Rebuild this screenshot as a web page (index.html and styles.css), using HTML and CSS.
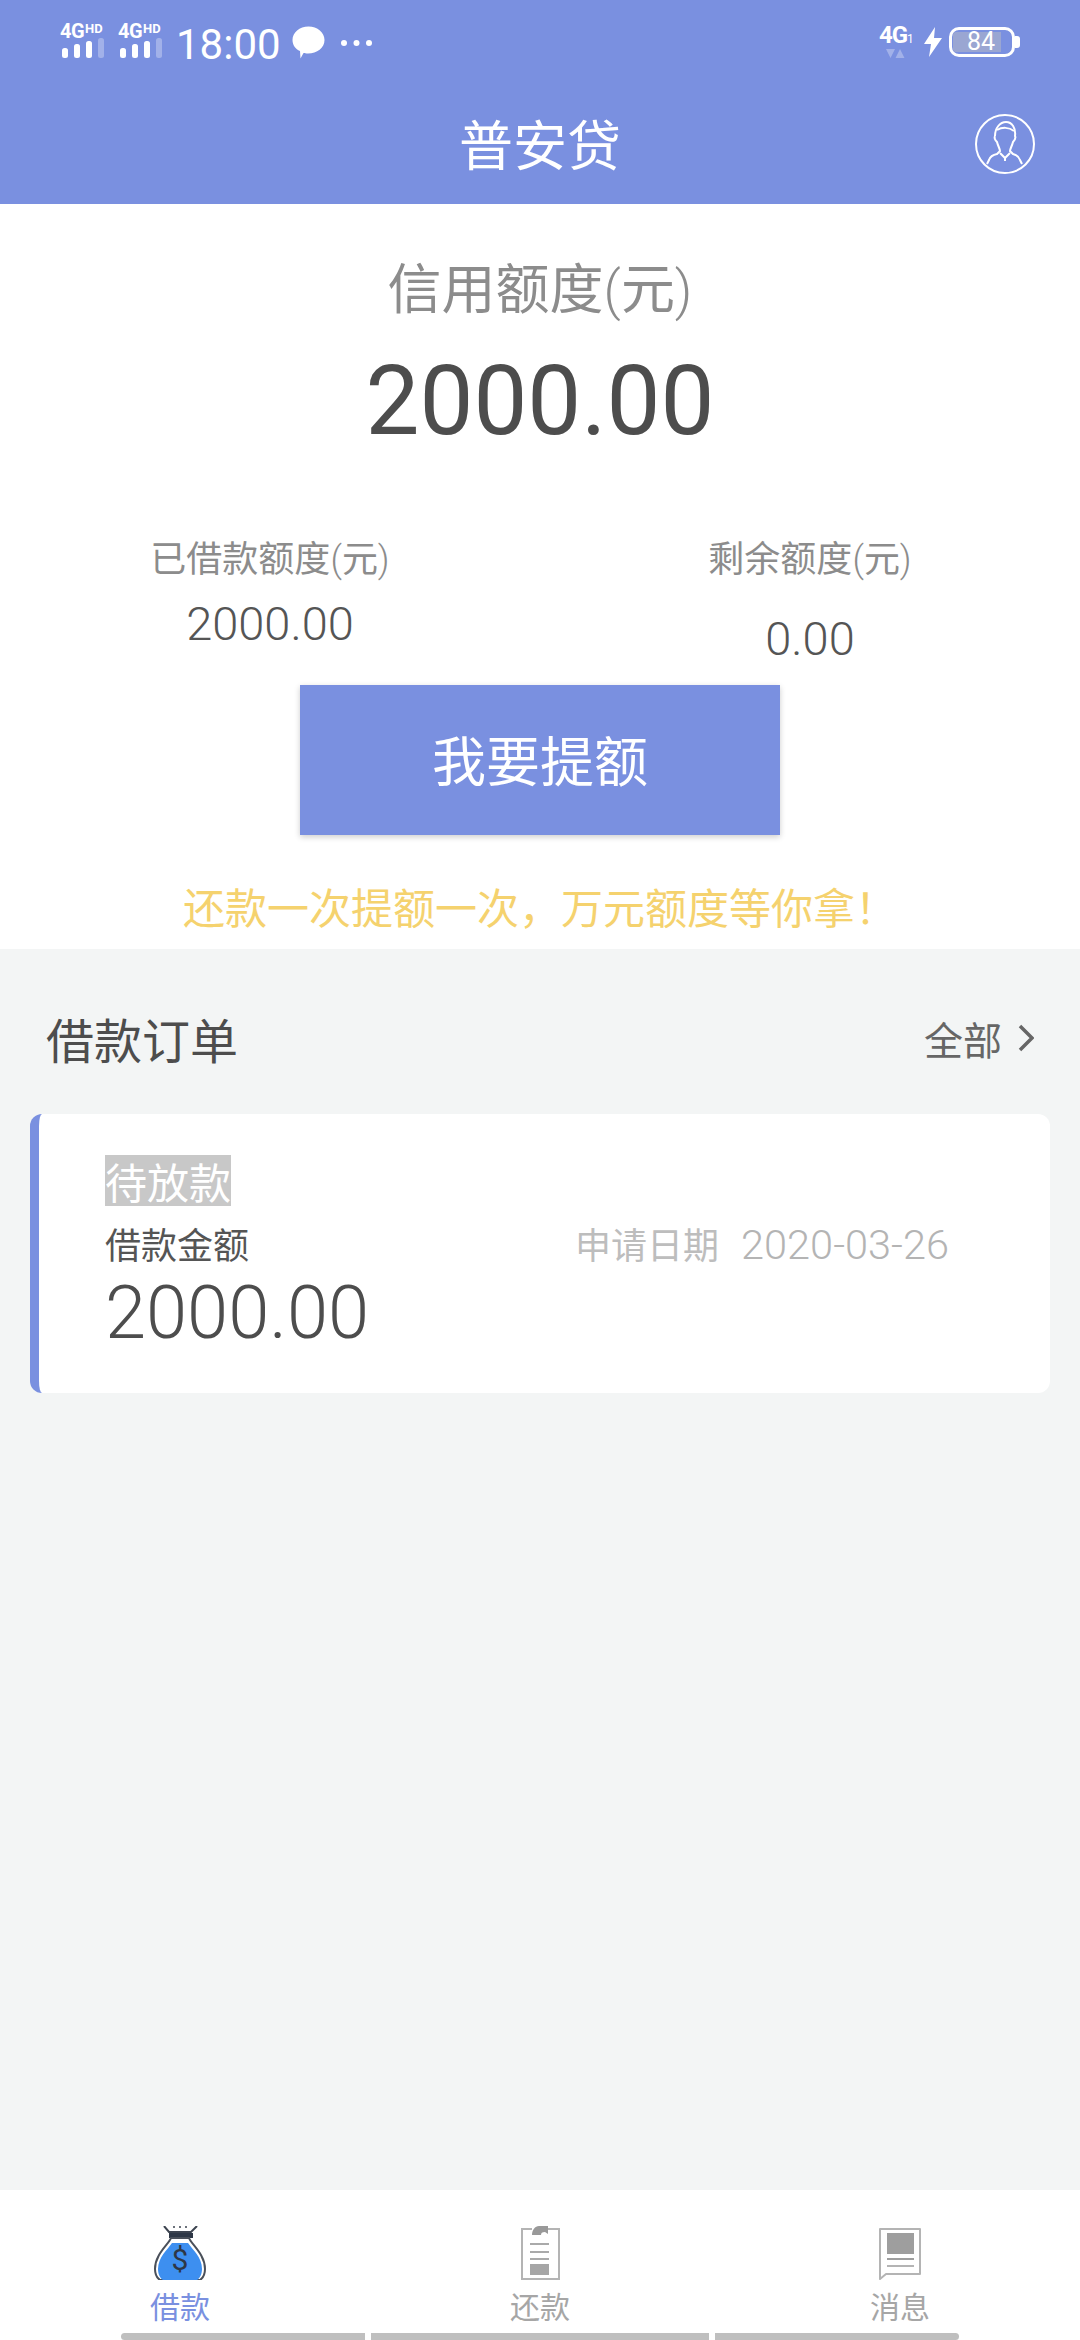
FILE: index.html
```html
<!DOCTYPE html>
<html lang="zh-CN">
<head>
<meta charset="utf-8">
<title>普安贷</title>
<link rel="stylesheet" href="styles.css">
</head>
<body>
<div class="app">
  <header class="top">
    <div class="status">
      <div class="status-left">
        <svg class="sig" width="48" height="42" viewBox="0 0 48 42"><text x="0" y="19" class="sig-4g">4G</text><text x="25" y="14" class="sig-hd">HD</text><rect x="2" y="29" width="6" height="10" rx="2.500" fill="#fff"/><rect x="14" y="25" width="6" height="14" rx="2.500" fill="#fff"/><rect x="26" y="22" width="6" height="17" rx="2.500" fill="#fff"/><rect x="38" y="19" width="6" height="20" rx="2.500" fill="#fff" opacity=".3"/></svg>
        <svg class="sig" width="48" height="42" viewBox="0 0 48 42"><text x="0" y="19" class="sig-4g">4G</text><text x="25" y="14" class="sig-hd">HD</text><rect x="2" y="29" width="6" height="10" rx="2.500" fill="#fff"/><rect x="14" y="25" width="6" height="14" rx="2.500" fill="#fff"/><rect x="26" y="22" width="6" height="17" rx="2.500" fill="#fff"/><rect x="38" y="19" width="6" height="20" rx="2.500" fill="#fff" opacity=".3"/></svg>
        <span class="time">18:00</span>
        <svg class="bubble" width="33" height="33" viewBox="0 0 33 33"><path d="M16.500 .5C25.500 .5 32.500 6.500 32.500 14C32.500 22 25 27.500 16 27.500C14 27.500 12.500 27.300 11.500 27L8.500 32.500L8 25C3.500 23 .5 19 .5 14C.5 6.500 7.500 .5 16.500 .5Z" fill="#fff"/></svg>
        <svg class="dots" width="33" height="8" viewBox="0 0 33 8"><circle cx="4" cy="4" r="3" fill="#fff"/><circle cx="16.500" cy="4" r="3" fill="#fff"/><circle cx="29" cy="4" r="3" fill="#fff"/></svg>
      </div>
      <div class="status-right">
        <svg class="net" width="34" height="42" viewBox="0 0 34 42"><text x="0" y="23" class="net-4g">4G</text><text x="28" y="23" class="net-1">1</text><path d="M7 29H16L11.500 38ZM16.500 38H25.500L21 29Z" fill="#fff" opacity=".3"/></svg>
        <svg class="bolt" width="18" height="30" viewBox="0 0 18 30"><path d="M11 0L0 17H7L5 30L18 11H10Z" fill="#fff"/></svg>
        <div class="batt">
          <div class="batt-body"><span class="batt-fill"></span><span class="batt-num">84</span></div>
          <span class="batt-nib"></span>
        </div>
      </div>
    </div>
    <div class="nav">
      <h1 class="nav-title">普安贷</h1>
      <svg class="avatar" width="60" height="60" viewBox="0 0 60 60" fill="none" stroke="#fff" stroke-width="2"><circle cx="30" cy="30" r="29"/><path d="M20 22C20 14 25 8 31 8C37 8 41 14 40 22C41 24 40 26 38 28C37 32 35 35 35 37L38 40C42 41 44 43 45 46L47 50"/><path d="M20 22C19 24 20 26 22 28C23 32 25 35 25 37L22 40C17 41 15 43 14 46L12 50"/><path d="M22 16C27 13 34 13 39 17"/><path d="M25 39L30 44L35 39M30 44V47"/></svg>
    </div>
  </header>

  <section class="hero">
    <div class="credit-label">信用额度<span class="paren">(元)</span></div>
    <div class="credit-value">2000.00</div>
    <div class="stats">
      <div class="stat">
        <div class="stat-label">已借款额度<span class="paren">(元)</span></div>
        <div class="stat-value">2000.00</div>
      </div>
      <div class="stat">
        <div class="stat-label">剩余额度<span class="paren">(元)</span></div>
        <div class="stat-value stat-value-low">0.00</div>
      </div>
    </div>
    <button class="cta" type="button">我要提额</button>
    <p class="promo">还款一次提额一次，万元额度等你拿！</p>
  </section>

  <main class="orders">
    <div class="orders-head">
      <h2 class="orders-title">借款订单</h2>
      <div class="orders-all">全部<svg class="chev" width="16" height="28" viewBox="0 0 16 28" fill="none" stroke="#666" stroke-width="3.500"><path d="M2 2L14 14L2 26"/></svg></div>
    </div>
    <article class="card">
      <span class="tag">待放款</span>
      <div class="card-row">
        <div class="amount-label">借款金额</div>
        <div class="date">申请日期<span class="date-num">2020-03-26</span></div>
      </div>
      <div class="amount">2000.00</div>
    </article>
  </main>

  <nav class="tabs">
    <div class="tab tab-on">
      <svg class="tab-icon" width="54" height="54" viewBox="0 0 54 54"><path d="M11 0L16 6H38L44 0" fill="none" stroke="#3d4450" stroke-width="2"/><path d="M20 1H22M26 1H28M32 1H34" stroke="#3d4450" stroke-width="1.500"/><rect x="16" y="7" width="24" height="5" fill="#2e3746"/><path d="M18 12C16 18 2 28 2 43C2 48 4 52 7 54H47C50 52 52 48 52 43C52 28 38 18 36 12Z" fill="#fff" stroke="#4a505a" stroke-width="2"/><path d="M19 17H35C39 23 49 31 49 43C49 48 47 52 44 54H10C7 52 5 48 5 43C5 31 15 23 19 17Z" fill="#3d8ff0"/><text x="27" y="44" class="bag-sign">$</text></svg>
      <span class="tab-text">借款</span>
    </div>
    <div class="tab">
      <svg class="tab-icon" width="54" height="54" viewBox="0 0 54 54"><path d="M35 3H46V53H9V3H19" fill="none" stroke="#b4b4b4" stroke-width="2"/><path d="M19 9C19 4 22 0 26 0H35V8L32 6C29 6 28 7 28 9Z" fill="#999"/><path d="M17 18H36M17 26H36M17 33H36" stroke="#aaa" stroke-width="2"/><rect x="17" y="38" width="19" height="11" fill="#a6a6a6"/></svg>
      <span class="tab-text">还款</span>
    </div>
    <div class="tab">
      <svg class="tab-icon" width="54" height="54" viewBox="0 0 54 54"><path d="M7 3H47V48H13L7 53Z" fill="none" stroke="#b4b4b4" stroke-width="2" stroke-linejoin="round"/><rect x="14" y="7" width="27" height="21" fill="#9e9e9e"/><path d="M14 33H41" stroke="#9e9e9e" stroke-width="2"/><path d="M14 40H41" stroke="#b4b4b4" stroke-width="2"/></svg>
      <span class="tab-text">消息</span>
    </div>
  </nav>
  <div class="scrollbars">
    <span class="sb sb-first"></span><span class="sb sb-mid"></span><span class="sb sb-last"></span>
  </div>
</div>
</body>
</html>
```
FILE: styles.css
```css
* { box-sizing: border-box; margin: 0; padding: 0; }
html, body { width: 1080px; height: 2340px; overflow: hidden; background: #f3f5f5; }
body { font-family: "Noto Sans CJK SC", Roboto, sans-serif; color: #4d4d4d; }
.app { display: flex; flex-direction: column; width: 1080px; height: 2340px; }

.top { height: 204px; flex: none; background: #7a90e0; color: #fff; }
.status { height: 84px; display: flex; justify-content: space-between; padding: 22px 60px 0 60px; }
.status-left { display: flex; align-items: flex-start; }
.sig { display: block; margin: -3px 10px 0 0; }
.sig-4g { font: 700 20px Roboto, sans-serif; fill: #fff; letter-spacing: -.5px; }
.sig-hd { font: 700 13px Roboto, sans-serif; fill: #fff; }
.time { font: 400 42px/44px Roboto, sans-serif; margin: 1px 11px 0 0; color: #fff; }
.bubble { margin-top: 4px; }
.dots { margin: 17px 0 0 15px; }
.status-right { display: flex; align-items: flex-start; }
.net { margin: -2px 11px 0 0; }
.net-4g { font: 700 24px Roboto, sans-serif; fill: #fff; letter-spacing: -1px; }
.net-1 { font: 400 12px Roboto, sans-serif; fill: #fff; }
.bolt { margin: 5px 7px 0 0; }
.batt { display: flex; align-items: center; height: 30px; margin-top: 5px; }
.batt-body { position: relative; width: 66px; height: 30px; border: 3px solid #fff; border-radius: 10px; display: flex; align-items: center; }
.batt-fill { position: absolute; left: 1px; top: 2px; bottom: 2px; width: 48px; background: #9aa6d2; border-radius: 3px 0 0 3px; }
.batt-num { position: relative; width: 100%; padding-left: 15px; font: 400 25px/24px Roboto, sans-serif; color: #fff; text-align: left; }
.batt-nib { width: 5px; height: 12px; background: #fff; border-radius: 0 3px 3px 0; }

.nav { position: relative; height: 120px; display: flex; align-items: center; justify-content: center; }
.nav-title { font-size: 54px; font-weight: 400; line-height: 60px; margin-top: -2px; color: #fff; }
.avatar { position: absolute; right: 45px; top: 30px; }

.hero { height: 745px; flex: none; background: #fff; display: flex; flex-direction: column; align-items: center; padding-top: 30px; }
.paren { font-family: Roboto, sans-serif; font-weight: 300; }
.credit-label { font-size: 54px; line-height: 60px; color: #8c8c8c; margin-top: 22px; }
.credit-value { font: 400 96px/100px Roboto, sans-serif; color: #4d4d4d; margin-top: 30px; }
.stats { width: 100%; display: flex; height: 151px; margin-top: 83px; }
.stat { width: 50%; display: flex; flex-direction: column; align-items: center; }
.stat-label { font-size: 36px; line-height: 44px; color: #8c8c8c; }
.stat-value { font: 300 47px/50px Roboto, sans-serif; color: #555; margin-top: 17px; }
.stat-value-low { margin-top: 32px; }
.cta { width: 480px; height: 150px; flex: none; border: 0; padding-bottom: 3px; background: #7a90e0; color: #fff; font-family: inherit; font-size: 54px; box-shadow: 0 2px 6px rgba(0,0,0,.2); }
.promo { font-size: 42px; line-height: 50px; color: #f5d26e; margin-top: 46px; }

.orders { flex: 1; padding: 0 30px; }
.orders-head { height: 165px; display: flex; justify-content: space-between; align-items: center; padding: 12px 16px 0 16px; }
.orders-title { font-size: 48px; font-weight: 400; line-height: 60px; color: #4d4d4d; }
.orders-all { display: flex; align-items: center; font-size: 39px; color: #666; }
.chev { margin-left: 16px; }
.card { height: 279px; background: #fff; border-left: 9px solid #7a90e0; border-radius: 12px; padding: 41px 0 0 66px; }
.tag { display: block; width: 126px; height: 51px; background: #c8c8c8; color: #fff; font-size: 42px; line-height: 51px; }
.card-row { display: flex; justify-content: space-between; height: 50px; padding-right: 101px; margin-top: 12px; }
.amount-label { font-size: 36px; line-height: 50px; color: #555; }
.date { font-size: 36px; line-height: 50px; color: #bdbdbd; }
.date-num { font-family: Roboto, sans-serif; font-size: 41.500px; font-weight: 300; margin-left: 22px; color: #b4b4b4; }
.amount { font: 300 74px/70px Roboto, sans-serif; color: #4d4d4d; margin-top: 10px; }

.tabs { height: 143px; flex: none; background: #fff; display: grid; grid-template-columns: 360px 360px 360px; padding-top: 36px; }
.tab { display: flex; flex-direction: column; align-items: center; }
.tab-icon { display: block; }
.tab-text { font-size: 30px; line-height: 40px; color: #a6a6a6; margin-top: 5px; }
.tab-on .tab-text { color: #7a90e0; }
.bag-sign { font: 400 30px Roboto, sans-serif; fill: #2e3746; text-anchor: middle; }

.scrollbars { height: 7px; flex: none; background: #fff; display: flex; gap: 6px; padding-left: 121px; }
.sb { display: block; height: 7px; background: #bfbfbf; }
.sb-first { width: 244px; border-radius: 4px 0 0 4px; }
.sb-mid { width: 338px; }
.sb-last { width: 244px; border-radius: 0 4px 4px 0; }
```
